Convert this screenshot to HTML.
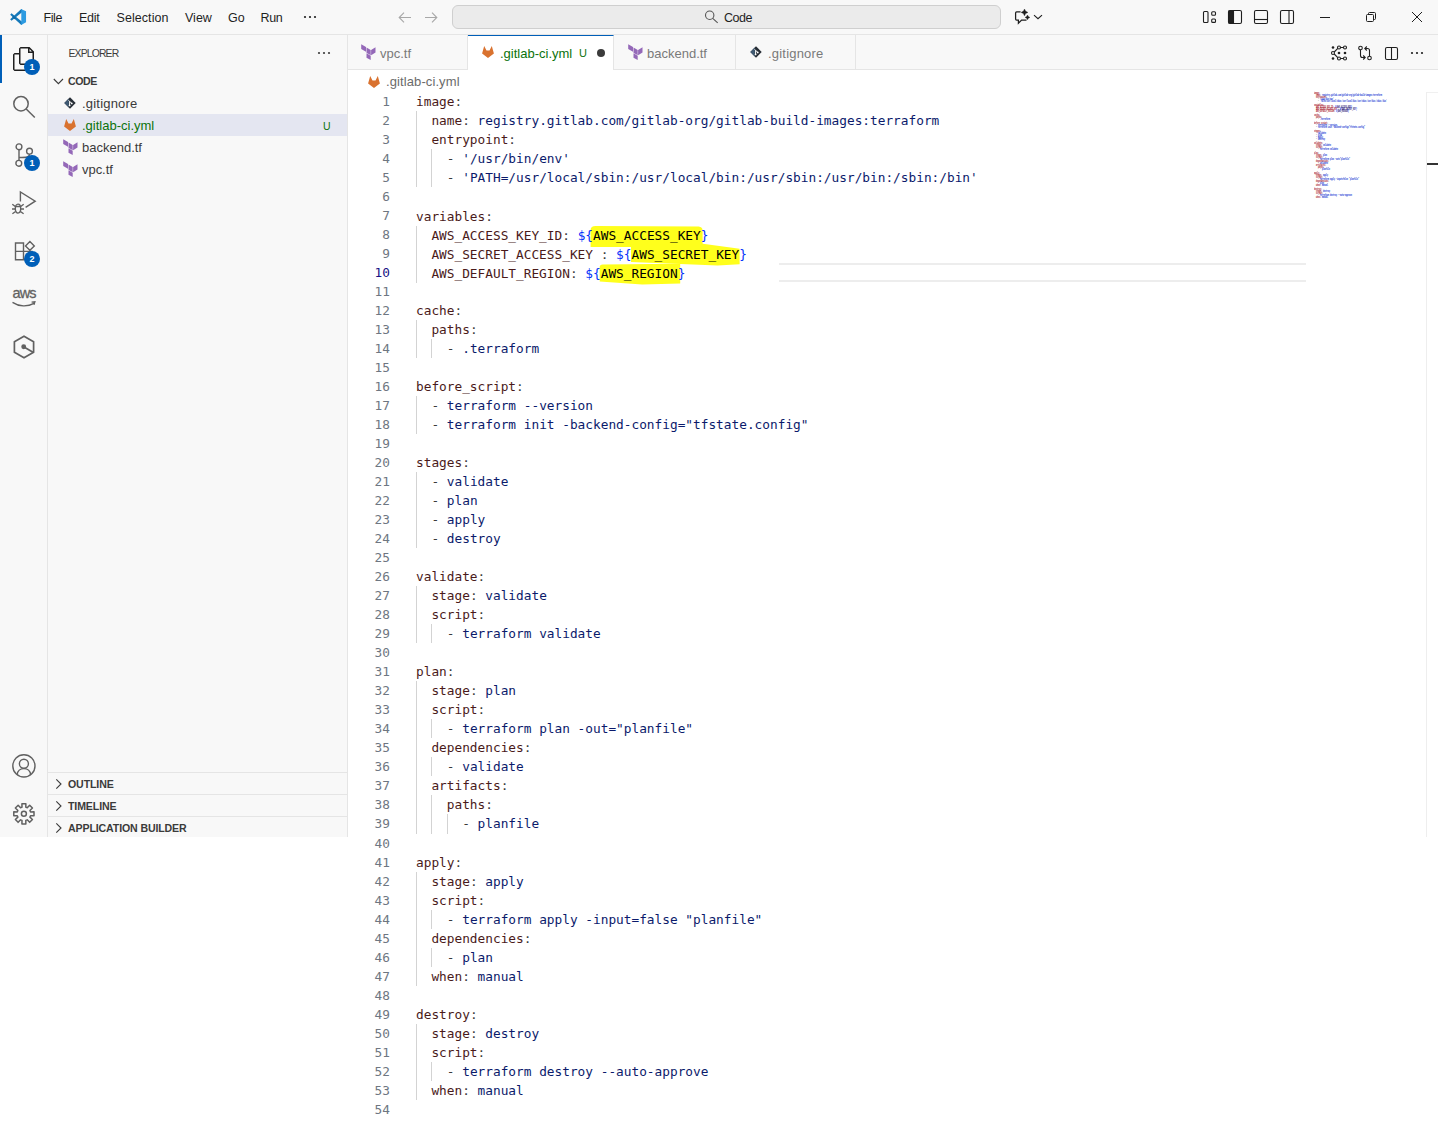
<!DOCTYPE html>
<html lang="en">
<head>
<meta charset="utf-8">
<title>.gitlab-ci.yml - Code - Visual Studio Code</title>
<style>
*{box-sizing:border-box;margin:0;padding:0}
html,body{width:1442px;height:1138px;background:#fff;overflow:hidden}
body{position:relative;font-family:"Liberation Sans",sans-serif;font-size:13px;color:#3b3b3b}
.abs{position:absolute}
i{display:block;position:absolute;font-style:normal}
svg{display:block;position:absolute;overflow:visible}
/* ---------- title bar ---------- */
#titlebar{position:absolute;left:0;top:0;width:1438px;height:35px;background:#f8f8f8;border-bottom:1px solid #e5e5e5}
#titlebar .m{position:absolute;top:0;height:34px;line-height:36px;font-size:12.5px;color:#1f1f1f;white-space:nowrap}
#search{position:absolute;left:452px;top:5px;width:549px;height:24px;background:#ebebeb;border:1px solid #cfcfcf;border-radius:6px}
#search span{position:absolute;left:271px;top:0;line-height:24px;font-size:12.5px;letter-spacing:-.5px;color:#1f1f1f}
/* ---------- activity bar ---------- */
#activity{position:absolute;left:0;top:35px;width:48px;height:802px;background:#f8f8f8;border-right:1px solid #e5e5e5}
#activity .ind{left:0;top:0;width:2px;height:48px;background:#005fb8}
.badge{position:absolute;width:16px;height:16px;border-radius:8px;background:#005fb8;color:#fff;font-size:9px;font-weight:bold;line-height:16px;text-align:center}
/* ---------- side bar ---------- */
#sidebar{position:absolute;left:48px;top:35px;width:300px;height:802px;background:#f8f8f8;border-right:1px solid #e5e5e5}
#sidebar .title{position:absolute;left:20.5px;top:0;height:35px;line-height:37px;font-size:10.4px;letter-spacing:-.84px;color:#3b3b3b;white-space:nowrap}
#sidebar .hd{position:absolute;left:0;width:299px;height:22px;line-height:22px;font-size:10.6px;letter-spacing:-.13px;font-weight:bold;color:#3b3b3b;white-space:nowrap}
#sidebar .hd b{position:absolute;left:20px;top:0}
#sidebar .hd.bt{border-top:1px solid #e5e5e5}
#sidebar .f{position:absolute;left:0;width:299px;height:22px;line-height:24px;font-size:13px;color:#3b3b3b;white-space:nowrap}
#sidebar .f span{position:absolute;left:34px;top:0}
#sidebar .f.sel{background:#e4e6f1;color:#0c730c}
#sidebar .f .u{left:auto;right:16.500px;top:-.5px;font-size:10.500px;color:#0c730c}
/* ---------- editor ---------- */
#tabs{position:absolute;left:348px;top:35px;width:1090px;height:35px;background:#f8f8f8;border-bottom:1px solid #e5e5e5}
.tab{position:absolute;top:0;height:35px;border-right:1px solid #e5e5e5;line-height:37px;font-size:13px;color:#7a7a7a;white-space:nowrap}
.tab span{position:absolute;top:0}
.tab.act{background:#fff;border-top:1px solid #005fb8;color:#0c730c;height:35px;line-height:35px}
#crumb{position:absolute;left:348px;top:70px;width:1078px;height:22px;line-height:24px;letter-spacing:.1px;font-size:13px;color:#6b6b6b;white-space:nowrap}
#crumb span{position:absolute;left:38px;top:0}
#code{position:absolute;left:348px;top:92px;width:958px;font-family:"DejaVu Sans Mono","Liberation Mono",monospace;font-size:12.79px;line-height:19px;color:#3b3b3b}
.row{position:relative;height:19px}
.ln{position:absolute;left:0;top:0;width:42px;text-align:right;color:#6e7681}
.ln.cur{color:#171184}
.tx{position:absolute;left:68px;top:0;white-space:pre}
.k{color:#4a1a1a}.v{color:#0b1a6b}.p{color:#3b3b3b}.b{color:#0431fa}.h{color:#000}
.g{width:1px;background:#d3d3d3}
#minimap{position:absolute;left:1314px;top:92px;width:924px;transform-origin:0 0;transform:scale(.12987,.2);font-family:"DejaVu Sans Mono","Liberation Mono",monospace;font-size:12.79px;line-height:10px;font-weight:bold;white-space:pre}
#minimap .mr{height:10px}
#minimap .k{color:#a31515}#minimap .v{color:#0431d0}#minimap .b{color:#0431fa}#minimap .h{color:#10106a}
.row.seam{margin-top:1px}
.tx.sh{top:1px}
</style>
</head>
<body>

<!-- ================= TITLE BAR ================= -->
<div id="titlebar">
  <svg style="left:10px;top:9px" width="16" height="16" viewBox="0 0 16 16">
    <path d="M.2 10.200L1.500 11.700 12.050 3.200V.5L11.300 .1z" fill="#1579ba"/>
    <path d="M.2 5.800L1.500 4.300 12.050 12.800V15.500L11.300 15.900z" fill="#1579ba"/>
    <path d="M3.700 6.800L6.300 9 4.800 10.200 2.200 8z" fill="#0f6aa6"/>
    <path d="M11.300 .1L12.050 .5 16.050 2.300V13.300L12.050 15.500 11.300 15.900z" fill="#2d9be1"/>
  </svg>
  <div class="m" style="left:43.5px;letter-spacing:-.4px">File</div>
  <div class="m" style="left:79px;letter-spacing:-.3px">Edit</div>
  <div class="m" style="left:116.5px;letter-spacing:.07px">Selection</div>
  <div class="m" style="left:185px">View</div>
  <div class="m" style="left:228px;letter-spacing:.1px">Go</div>
  <div class="m" style="left:260.5px;letter-spacing:-.4px">Run</div>
  <svg style="left:302px;top:9px" width="16" height="16" viewBox="0 0 16 16" fill="#1f1f1f"><circle cx="3" cy="8" r="1.1"/><circle cx="8" cy="8" r="1.1"/><circle cx="13" cy="8" r="1.1"/></svg>
  <!-- nav arrows -->
  <svg style="left:397px;top:9px" width="16" height="16" viewBox="0 0 16 16" fill="none" stroke="#a8a8a8" stroke-width="1.1"><path d="M14 8.5H2.5M7 3.700L2.200 8.500 7 13.300"/></svg>
  <svg style="left:423px;top:9px" width="16" height="16" viewBox="0 0 16 16" fill="none" stroke="#a8a8a8" stroke-width="1.1"><path d="M2 8.5h11.500M9 3.700L13.800 8.500 9 13.300"/></svg>
  <div id="search">
    <svg style="left:252px;top:4px" width="14" height="14" viewBox="0 0 14 14" fill="none" stroke="#555" stroke-width="1.1"><circle cx="4.7" cy="5.25" r="4.2"/><path d="M7.7 8.3l5 4.500"/></svg>
    <span>Code</span>
  </div>
  <!-- copilot-ish chat icon -->
  <svg style="left:1013px;top:9px" width="16" height="16" viewBox="0 0 16 16" fill="none" stroke="#1f1f1f" stroke-width="1.25"><path d="M7.600 2.900H3.600q-1 0-1 1V10q0 1 1 1h1.800v3.200L8.600 11h4.900"/><path d="M11.500 0q.5 2.900 3.400 3.400q-2.900 .5-3.400 3.400q-.5-2.900-3.400-3.400q2.900-.5 3.400-3.400zM14.500 6q.4 2 2.400 2.400q-2 .4-2.400 2.400q-.4-2-2.400-2.400q2-.4 2.400-2.400z" fill="#1f1f1f" stroke-width=".4"/></svg>
  <svg style="left:1032px;top:12px" width="10" height="10" viewBox="0 0 10 10" fill="none" stroke="#1f1f1f" stroke-width="1.1"><path d="M2 3.200L6 6.700l4-3.600"/></svg>
  
  <svg style="left:1201px;top:9px" width="16" height="16" viewBox="0 0 16 16" fill="none" stroke="#1f1f1f" stroke-width="1.1"><rect x="2.5" y="2.500" width="4.5" height="11" rx="1"/><rect x="10.7" y="2.8" width="3.8" height="3.4" rx="1"/><rect x="10.7" y="10" width="3.8" height="3.4" rx="1"/></svg>
  <svg style="left:1227px;top:9px" width="16" height="16" viewBox="0 0 16 16" fill="none" stroke="#1f1f1f" stroke-width="1.1"><rect x="1.5" y="1.5" width="13" height="13" rx="1.5"/><path d="M2 2h4.500v12H2z" fill="#1f1f1f"/></svg>
  <svg style="left:1253px;top:9px" width="16" height="16" viewBox="0 0 16 16" fill="none" stroke="#1f1f1f" stroke-width="1.1"><rect x="1.5" y="1.5" width="13" height="13" rx="1.5"/><path d="M1.5 10.5h13"/></svg>
  <svg style="left:1279px;top:9px" width="16" height="16" viewBox="0 0 16 16" fill="none" stroke="#1f1f1f" stroke-width="1.1"><rect x="1.5" y="1.5" width="13" height="13" rx="1.5"/><path d="M10 1.5v13"/></svg>
  <!-- window controls -->
  <svg style="left:1320px;top:12px" width="10" height="10" viewBox="0 0 10 10" stroke="#1f1f1f" stroke-width="1"><path d="M0 5.5h10"/></svg>
  <svg style="left:1366px;top:12px" width="10" height="10" viewBox="0 0 10 10" fill="none" stroke="#1f1f1f" stroke-width="1"><rect x=".5" y="2.5" width="7" height="7" rx="1"/><path d="M2.5 2.5V1.5q0-1 1-1h5q1 0 1 1v5q0 1-1 1H7.5"/></svg>
  <svg style="left:1412px;top:12px" width="10" height="10" viewBox="0 0 10 10" stroke="#1f1f1f" stroke-width="1"><path d="M0 0l10 10M10 0L0 10"/></svg>
</div>

<!-- ================= ACTIVITY BAR ================= -->
<div id="activity">
  <i class="ind"></i>
  <!-- explorer -->
  <svg style="left:12px;top:12px" width="24" height="24" viewBox="0 0 24 24" fill="#1f1f1f"><path d="M17.5 0h-9L7 1.5V6H2.5L1 7.5v15.07L2.5 24h12.07L16 22.57V18h4.7l1.3-1.43V4.5L17.5 0zm0 2.12l2.38 2.38H17.5V2.12zm-3 20.38h-12v-15H7v9.07L8.500 18h6v4.5zm6-6h-12v-15H16V6h4.5v10.500z"/></svg>
  <div class="badge" style="left:24px;top:24px">1</div>
  <!-- search -->
  <svg style="left:12px;top:60px" width="24" height="24" viewBox="0 0 24 24" fill="none" stroke="#616161" stroke-width="1.5"><circle cx="9" cy="8.700" r="7.200"/><path d="M14.200 14l8.600 8.500"/></svg>
  <!-- source control -->
  <svg style="left:12px;top:108px" width="24" height="24" viewBox="0 0 24 24" fill="none" stroke="#616161" stroke-width="1.400"><circle cx="7" cy="3.800" r="2.900"/><circle cx="17.500" cy="8.200" r="2.900"/><circle cx="6.800" cy="20.300" r="2.900"/><path d="M7 6.700v10.700M17.500 11.100c0 3.200-3 3.400-10.500 3.400"/></svg>
  <div class="badge" style="left:24px;top:120px">1</div>
  <!-- run and debug -->
  <svg style="left:12px;top:156px" width="24" height="24" viewBox="0 0 24 24" fill="none" stroke="#616161" stroke-width="1.400"><path d="M8.400 10.600V1L23.200 10.200 13.600 16.300"/><ellipse cx="6" cy="17.600" rx="2.700" ry="4.500"/><path d="M3.400 15.500h5.200M.3 13.300l3 2.200M11.700 13.300l-3 2.200M0 18h3.300M8.700 18H12M.4 22.800l3.200-2.300M11.600 22.800l-3.200-2.300"/></svg>
  <!-- extensions -->
  <svg style="left:12px;top:204px" width="24" height="24" viewBox="0 0 24 24" fill="none" stroke="#616161" stroke-width="1.400"><path d="M3.500 4h8v8.400h-8zM3.500 12.400h8v8.400h-8zM11.500 12.400h8.400v8.400h-8.400zM17.900 2.500l4.400 4.400-4.400 4.400-4.400-4.400z"/></svg>
  <div class="badge" style="left:24px;top:216px">2</div>
  <!-- aws -->
  <div class="abs" style="left:12.500px;top:250px;width:26px;height:16px;line-height:16px;font-size:14.500px;color:#616161;-webkit-text-stroke:.3px #616161;letter-spacing:-.9px;white-space:nowrap">aws</div>
  <svg style="left:12px;top:266px" width="24" height="8" viewBox="0 0 24 8" fill="none" stroke="#616161" stroke-width="1.300"><path d="M.5 1.400c6.500 4.400 15 4.600 21.500 1M19.600 1.100l3.300-.3-.9 3"/></svg>
  <!-- hex icon -->
  <svg style="left:12px;top:300px" width="24" height="24" viewBox="0 0 24 24" fill="none" stroke="#616161" stroke-width="1.700"><path d="M12 1.200l9.600 5.500v10.600L12 22.800l-9.600-5.500V6.700z"/><path d="M12 12l9 5.200"/><circle cx="11.700" cy="11.800" r="1.600" fill="#616161"/></svg>
  <!-- account -->
  <svg style="left:12px;top:719px" width="24" height="24" viewBox="0 0 24 24" fill="none" stroke="#616161" stroke-width="1.400"><circle cx="11.900" cy="11.900" r="11.100"/><circle cx="11.900" cy="9.700" r="4.500"/><path d="M5.100 20.600c.6-4 3.300-6 6.800-6s6.200 2 6.800 6"/></svg>
  <!-- settings gear -->
  <svg style="left:12px;top:767px" width="24" height="24" viewBox="0 0 24 24" fill="none" stroke="#616161" stroke-width="1.500" stroke-linejoin="round"><circle cx="11.900" cy="11.800" r="2.500"/><path d="M10.00 5.17L9.93 1.69L13.87 1.69L13.80 5.17L15.25 5.77L17.66 3.26L20.44 6.04L17.93 8.45L18.53 9.90L22.01 9.83L22.01 13.77L18.53 13.70L17.93 15.15L20.44 17.56L17.66 20.34L15.25 17.83L13.80 18.43L13.87 21.91L9.93 21.91L10.00 18.43L8.55 17.83L6.14 20.34L3.36 17.56L5.87 15.15L5.27 13.70L1.79 13.77L1.79 9.83L5.27 9.90L5.87 8.45L3.36 6.04L6.14 3.26L8.55 5.77z"/></svg>
</div>

<!-- ================= SIDE BAR ================= -->
<div id="sidebar">
  <div class="title">EXPLORER</div>
  <svg style="left:268px;top:10px" width="16" height="16" viewBox="0 0 16 16" fill="#3b3b3b"><circle cx="3" cy="8" r="1.100"/><circle cx="8" cy="8" r="1.100"/><circle cx="13" cy="8" r="1.100"/></svg>
  <div class="hd" style="top:35px"><svg style="left:4px;top:3px" width="16" height="16" viewBox="0 0 16 16" fill="none" stroke="#3b3b3b" stroke-width="1.100"><path d="M1.800 6L6.400 10.600 11 6"/></svg><b style="letter-spacing:-.45px">CODE</b></div>
  <div class="f" style="top:57px">
    <svg style="left:16px;top:5px" width="12" height="12" viewBox="0 0 12 12"><path d="M6 .3L11.700 6 6 11.700.3 6z" fill="#262d35"/><path d="M4.800 1.500v9L.3 6z" fill="#3f5a73"/><path d="M4.600 3.300l3.200 3.200M5.600 4.400v4.200" stroke="#fff" stroke-width="1" fill="none"/><circle cx="5.600" cy="8.400" r=".9" fill="#fff"/><circle cx="7.700" cy="6.400" r=".9" fill="#fff"/></svg>
    <span style="letter-spacing:.2px">.gitignore</span></div>
  <div class="f sel" style="top:79px">
    <svg style="left:16px;top:5px" width="12" height="12" viewBox="0 0 12 12"><path d="M6 12L.1 7.400 2.200 0l2.300 4.600h3L9.800 0l2.100 7.400z" fill="#d9722f"/></svg>
    <span>.gitlab-ci.yml</span><span class="u">U</span></div>
  <div class="f" style="top:101px">
    <svg style="left:15px;top:3.300px" width="14.500" height="16" viewBox="0 0 14.500 16" fill="#9468b8"><path d="M.2.300L5 3.100v4.700L.2 5.100zM5.500 3.400l4.200 2.500v5.300L5.500 8.700zM10.100 5.900l4.400-2.700v5.300l-4.400 2.700zM5.500 9.200l4.200 2.500v4.200l-4.200-2.200z"/></svg>
    <span>backend.tf</span></div>
  <div class="f" style="top:123px">
    <svg style="left:15px;top:3.300px" width="14.500" height="16" viewBox="0 0 14.500 16" fill="#9468b8"><path d="M.2.300L5 3.100v4.700L.2 5.100zM5.500 3.400l4.200 2.500v5.300L5.500 8.700zM10.100 5.900l4.400-2.700v5.300l-4.400 2.700zM5.500 9.200l4.200 2.500v4.200l-4.200-2.200z"/></svg>
    <span style="letter-spacing:-.05px">vpc.tf</span></div>

  <div class="hd bt" style="top:737px"><svg style="left:4px;top:3px" width="16" height="16" viewBox="0 0 16 16" fill="none" stroke="#3b3b3b" stroke-width="1.100"><path d="M4.300 3.300L9 8l-4.700 4.700"/></svg><b>OUTLINE</b></div>
  <div class="hd bt" style="top:759px"><svg style="left:4px;top:3px" width="16" height="16" viewBox="0 0 16 16" fill="none" stroke="#3b3b3b" stroke-width="1.100"><path d="M4.300 3.300L9 8l-4.700 4.700"/></svg><b>TIMELINE</b></div>
  <div class="hd bt" style="top:781px"><svg style="left:4px;top:3px" width="16" height="16" viewBox="0 0 16 16" fill="none" stroke="#3b3b3b" stroke-width="1.100"><path d="M4.300 3.300L9 8l-4.700 4.700"/></svg><b>APPLICATION BUILDER</b></div>
</div>

<!-- ================= EDITOR ================= -->
<div id="tabs">
  <div class="tab" style="left:0;width:120px">
    <svg style="left:12.700px;top:9.300px" width="14.500" height="16" viewBox="0 0 14.500 16" fill="#9468b8"><path d="M.2.300L5 3.100v4.700L.2 5.100zM5.500 3.400l4.200 2.500v5.300L5.500 8.700zM10.100 5.900l4.400-2.700v5.300l-4.400 2.700zM5.500 9.200l4.200 2.500v4.200l-4.200-2.200z"/></svg>
    <span style="left:32px">vpc.tf</span></div>
  <div class="tab act" style="left:120px;width:146px">
    <svg style="left:14px;top:10.4px" width="12" height="12" viewBox="0 0 12 12"><path d="M6 12L.1 7.400 2.200 0l2.300 4.600h3L9.800 0l2.100 7.400z" fill="#d9722f"/></svg>
    <span style="left:32px">.gitlab-ci.yml</span><span style="left:111px;font-size:11px">U</span>
    <i style="left:129px;top:13px;width:8px;height:8px;border-radius:4px;background:#3b3b3b"></i></div>
  <div class="tab" style="left:266px;width:122px">
    <svg style="left:14px;top:9.300px" width="14.500" height="16" viewBox="0 0 14.500 16" fill="#9468b8"><path d="M.2.300L5 3.100v4.700L.2 5.100zM5.500 3.400l4.200 2.500v5.300L5.500 8.700zM10.100 5.900l4.400-2.700v5.300l-4.400 2.700zM5.500 9.200l4.200 2.500v4.200l-4.200-2.200z"/></svg>
    <span style="left:33px">backend.tf</span></div>
  <div class="tab" style="left:388px;width:120px">
    <svg style="left:14px;top:11px" width="12" height="12" viewBox="0 0 12 12"><path d="M6 .3L11.700 6 6 11.700.3 6z" fill="#262d35"/><path d="M4.800 1.500v9L.3 6z" fill="#3f5a73"/><path d="M4.600 3.300l3.200 3.200M5.600 4.400v4.200" stroke="#fff" stroke-width="1" fill="none"/><circle cx="5.600" cy="8.400" r=".9" fill="#fff"/><circle cx="7.700" cy="6.400" r=".9" fill="#fff"/></svg>
    <span style="left:32px;letter-spacing:.2px">.gitignore</span></div>
  <!-- editor actions -->
  <svg style="left:983px;top:10px" width="16" height="16" viewBox="0 0 16 16" fill="none" stroke="#1f1f1f" stroke-width="1.100"><circle cx="8" cy="2.500" r="1.500"/><circle cx="14" cy="2.500" r="1.500"/><circle cx="8" cy="13.500" r="1.500"/><circle cx="14" cy="13.500" r="1.500"/><circle cx="2" cy="8" r="1.500"/><path d="M9.500 2.500h3M9.500 13.500h3M3.200 7l3.600-3.600M3.200 9l3.600 3.600"/><g fill="#1f1f1f" stroke="none"><circle cx="2" cy="2.500" r="1.300"/><circle cx="2" cy="13.500" r="1.300"/><circle cx="8" cy="8" r="1.300"/><circle cx="14" cy="8" r="1.300"/></g></svg>
  <svg style="left:1009px;top:10px" width="16" height="16" viewBox="0 0 16 16" fill="none" stroke="#1f1f1f" stroke-width="1.100"><circle cx="3.500" cy="3" r="1.800"/><circle cx="12.500" cy="13" r="1.800"/><path d="M3.500 4.800v5.700q0 2 2 2h2.500M6.200 10.500l2 2-2 2M12.500 11.200V5.500q0-2-2-2H8M9.800 1.500l-2 2 2 2"/></svg>
  <svg style="left:1035px;top:10px" width="16" height="16" viewBox="0 0 16 16" fill="none" stroke="#1f1f1f" stroke-width="1.1"><rect x="2.5" y="2.5" width="12" height="12" rx="1.5"/><path d="M8.500 2.5v12"/></svg>
  <svg style="left:1061px;top:10px" width="16" height="16" viewBox="0 0 16 16" fill="#1f1f1f"><circle cx="3" cy="8" r="1.100"/><circle cx="8" cy="8" r="1.100"/><circle cx="13" cy="8" r="1.100"/></svg>
</div>
<div id="crumb">
  <svg style="left:20px;top:5.700px" width="12" height="12" viewBox="0 0 12 12"><path d="M6 12L.1 7.400 2.200 0l2.300 4.600h3L9.800 0l2.100 7.400z" fill="#d9722f"/></svg>
  <span>.gitlab-ci.yml</span>
</div>

<!-- yellow highlighter strokes -->
<svg style="left:0;top:0" width="1442" height="1138" viewBox="0 0 1442 1138" fill="#ffff1c">
  <path d="M590.600 230q0-4 5-4l103 .600q4 .400 4 4v16.400h-112z"/>
  <path d="M631 243.500h70l38.600 5.200v15.600l-22 1.200-86.600-3.400z"/>
  <path d="M599.700 267q0-2.500 3-2.500l77.500-.700v19.600l-38 1-42.500-2.800z"/>
</svg>

<!-- current line outline -->
<i style="left:779px;top:263px;width:527px;height:19px;border-top:2px solid #ededed;border-bottom:2px solid #ededed"></i>

<!-- indent guides -->
<i class="g" style="left:416.0px;top:111px;height:76px"></i>
<i class="g" style="left:431.4px;top:149px;height:38px"></i>
<i class="g" style="left:416.0px;top:226px;height:57px"></i>
<i class="g" style="left:416.0px;top:320px;height:38px"></i>
<i class="g" style="left:431.4px;top:339px;height:19px"></i>
<i class="g" style="left:416.0px;top:396px;height:38px"></i>
<i class="g" style="left:416.0px;top:472px;height:76px"></i>
<i class="g" style="left:416.0px;top:586px;height:57px"></i>
<i class="g" style="left:431.4px;top:624px;height:19px"></i>
<i class="g" style="left:416.0px;top:681px;height:153px"></i>
<i class="g" style="left:431.4px;top:719px;height:19px"></i>
<i class="g" style="left:431.4px;top:757px;height:19px"></i>
<i class="g" style="left:431.4px;top:795px;height:39px"></i>
<i class="g" style="left:446.8px;top:814px;height:20px"></i>
<i class="g" style="left:416.0px;top:872px;height:114px"></i>
<i class="g" style="left:431.4px;top:910px;height:19px"></i>
<i class="g" style="left:431.4px;top:948px;height:19px"></i>
<i class="g" style="left:416.0px;top:1024px;height:76px"></i>
<i class="g" style="left:431.4px;top:1062px;height:19px"></i>

<div id="code">
<div class="row"><span class="ln">1</span><span class="tx"><span class="k">image</span><span class="p">:</span></span></div>
<div class="row"><span class="ln">2</span><span class="tx">  <span class="k">name</span><span class="p">:</span> <span class="v">registry.gitlab.com/gitlab-org/gitlab-build-images:terraform</span></span></div>
<div class="row"><span class="ln">3</span><span class="tx">  <span class="k">entrypoint</span><span class="p">:</span></span></div>
<div class="row"><span class="ln">4</span><span class="tx">    <span class="p">-</span> <span class="v">'/usr/bin/env'</span></span></div>
<div class="row"><span class="ln">5</span><span class="tx">    <span class="p">-</span> <span class="v">'PATH=/usr/local/sbin:/usr/local/bin:/usr/sbin:/usr/bin:/sbin:/bin'</span></span></div>
<div class="row"><span class="ln">6</span><span class="tx"></span></div>
<div class="row"><span class="ln">7</span><span class="tx sh"><span class="k">variables</span><span class="p">:</span></span></div>
<div class="row"><span class="ln">8</span><span class="tx sh">  <span class="k">AWS_ACCESS_KEY_ID</span><span class="p">:</span> <span class="b">${</span><span class="h">AWS_ACCESS_KEY</span><span class="b">}</span></span></div>
<div class="row"><span class="ln">9</span><span class="tx sh">  <span class="k">AWS_SECRET_ACCESS_KEY</span> <span class="p">:</span> <span class="b">${</span><span class="h">AWS_SECRET_KEY</span><span class="b">}</span></span></div>
<div class="row"><span class="ln cur">10</span><span class="tx sh">  <span class="k">AWS_DEFAULT_REGION</span><span class="p">:</span> <span class="b">${</span><span class="h">AWS_REGION</span><span class="b">}</span></span></div>
<div class="row"><span class="ln">11</span><span class="tx"></span></div>
<div class="row"><span class="ln">12</span><span class="tx"><span class="k">cache</span><span class="p">:</span></span></div>
<div class="row"><span class="ln">13</span><span class="tx">  <span class="k">paths</span><span class="p">:</span></span></div>
<div class="row"><span class="ln">14</span><span class="tx">    <span class="p">-</span> <span class="v">.terraform</span></span></div>
<div class="row"><span class="ln">15</span><span class="tx"></span></div>
<div class="row"><span class="ln">16</span><span class="tx"><span class="k">before_script</span><span class="p">:</span></span></div>
<div class="row"><span class="ln">17</span><span class="tx">  <span class="p">-</span> <span class="v">terraform --version</span></span></div>
<div class="row"><span class="ln">18</span><span class="tx">  <span class="p">-</span> <span class="v">terraform init -backend-config="tfstate.config"</span></span></div>
<div class="row"><span class="ln">19</span><span class="tx"></span></div>
<div class="row"><span class="ln">20</span><span class="tx"><span class="k">stages</span><span class="p">:</span></span></div>
<div class="row"><span class="ln">21</span><span class="tx">  <span class="p">-</span> <span class="v">validate</span></span></div>
<div class="row"><span class="ln">22</span><span class="tx">  <span class="p">-</span> <span class="v">plan</span></span></div>
<div class="row"><span class="ln">23</span><span class="tx">  <span class="p">-</span> <span class="v">apply</span></span></div>
<div class="row"><span class="ln">24</span><span class="tx">  <span class="p">-</span> <span class="v">destroy</span></span></div>
<div class="row"><span class="ln">25</span><span class="tx"></span></div>
<div class="row"><span class="ln">26</span><span class="tx"><span class="k">validate</span><span class="p">:</span></span></div>
<div class="row"><span class="ln">27</span><span class="tx">  <span class="k">stage</span><span class="p">:</span> <span class="v">validate</span></span></div>
<div class="row"><span class="ln">28</span><span class="tx">  <span class="k">script</span><span class="p">:</span></span></div>
<div class="row"><span class="ln">29</span><span class="tx">    <span class="p">-</span> <span class="v">terraform validate</span></span></div>
<div class="row"><span class="ln">30</span><span class="tx"></span></div>
<div class="row"><span class="ln">31</span><span class="tx"><span class="k">plan</span><span class="p">:</span></span></div>
<div class="row"><span class="ln">32</span><span class="tx">  <span class="k">stage</span><span class="p">:</span> <span class="v">plan</span></span></div>
<div class="row"><span class="ln">33</span><span class="tx">  <span class="k">script</span><span class="p">:</span></span></div>
<div class="row"><span class="ln">34</span><span class="tx">    <span class="p">-</span> <span class="v">terraform plan -out="planfile"</span></span></div>
<div class="row"><span class="ln">35</span><span class="tx">  <span class="k">dependencies</span><span class="p">:</span></span></div>
<div class="row"><span class="ln">36</span><span class="tx">    <span class="p">-</span> <span class="v">validate</span></span></div>
<div class="row"><span class="ln">37</span><span class="tx">  <span class="k">artifacts</span><span class="p">:</span></span></div>
<div class="row"><span class="ln">38</span><span class="tx">    <span class="k">paths</span><span class="p">:</span></span></div>
<div class="row"><span class="ln">39</span><span class="tx">      <span class="p">-</span> <span class="v">planfile</span></span></div>
<div class="row seam"><span class="ln">40</span><span class="tx"></span></div>
<div class="row"><span class="ln">41</span><span class="tx"><span class="k">apply</span><span class="p">:</span></span></div>
<div class="row"><span class="ln">42</span><span class="tx">  <span class="k">stage</span><span class="p">:</span> <span class="v">apply</span></span></div>
<div class="row"><span class="ln">43</span><span class="tx">  <span class="k">script</span><span class="p">:</span></span></div>
<div class="row"><span class="ln">44</span><span class="tx">    <span class="p">-</span> <span class="v">terraform apply -input=false "planfile"</span></span></div>
<div class="row"><span class="ln">45</span><span class="tx">  <span class="k">dependencies</span><span class="p">:</span></span></div>
<div class="row"><span class="ln">46</span><span class="tx">    <span class="p">-</span> <span class="v">plan</span></span></div>
<div class="row"><span class="ln">47</span><span class="tx">  <span class="k">when</span><span class="p">:</span> <span class="v">manual</span></span></div>
<div class="row"><span class="ln">48</span><span class="tx"></span></div>
<div class="row"><span class="ln">49</span><span class="tx"><span class="k">destroy</span><span class="p">:</span></span></div>
<div class="row"><span class="ln">50</span><span class="tx">  <span class="k">stage</span><span class="p">:</span> <span class="v">destroy</span></span></div>
<div class="row"><span class="ln">51</span><span class="tx">  <span class="k">script</span><span class="p">:</span></span></div>
<div class="row"><span class="ln">52</span><span class="tx">    <span class="p">-</span> <span class="v">terraform destroy --auto-approve</span></span></div>
<div class="row"><span class="ln">53</span><span class="tx">  <span class="k">when</span><span class="p">:</span> <span class="v">manual</span></span></div>
<div class="row"><span class="ln">54</span><span class="tx"></span></div>
</div>

<!-- minimap -->
<div id="minimap"><div class="mr"><span class="k">image</span><span class="p">:</span></div><div class="mr">  <span class="k">name</span><span class="p">:</span> <span class="v">registry.gitlab.com/gitlab-org/gitlab-build-images:terraform</span></div><div class="mr">  <span class="k">entrypoint</span><span class="p">:</span></div><div class="mr">    <span class="p">-</span> <span class="v">'/usr/bin/env'</span></div><div class="mr">    <span class="p">-</span> <span class="v">'PATH=/usr/local/sbin:/usr/local/bin:/usr/sbin:/usr/bin:/sbin:/bin'</span></div><div class="mr"></div><div class="mr"><span class="k">variables</span><span class="p">:</span></div><div class="mr">  <span class="k">AWS_ACCESS_KEY_ID</span><span class="p">:</span> <span class="b">${</span><span class="h">AWS_ACCESS_KEY</span><span class="b">}</span></div><div class="mr">  <span class="k">AWS_SECRET_ACCESS_KEY</span> <span class="p">:</span> <span class="b">${</span><span class="h">AWS_SECRET_KEY</span><span class="b">}</span></div><div class="mr">  <span class="k">AWS_DEFAULT_REGION</span><span class="p">:</span> <span class="b">${</span><span class="h">AWS_REGION</span><span class="b">}</span></div><div class="mr"></div><div class="mr"><span class="k">cache</span><span class="p">:</span></div><div class="mr">  <span class="k">paths</span><span class="p">:</span></div><div class="mr">    <span class="p">-</span> <span class="v">.terraform</span></div><div class="mr"></div><div class="mr"><span class="k">before_script</span><span class="p">:</span></div><div class="mr">  <span class="p">-</span> <span class="v">terraform --version</span></div><div class="mr">  <span class="p">-</span> <span class="v">terraform init -backend-config="tfstate.config"</span></div><div class="mr"></div><div class="mr"><span class="k">stages</span><span class="p">:</span></div><div class="mr">  <span class="p">-</span> <span class="v">validate</span></div><div class="mr">  <span class="p">-</span> <span class="v">plan</span></div><div class="mr">  <span class="p">-</span> <span class="v">apply</span></div><div class="mr">  <span class="p">-</span> <span class="v">destroy</span></div><div class="mr"></div><div class="mr"><span class="k">validate</span><span class="p">:</span></div><div class="mr">  <span class="k">stage</span><span class="p">:</span> <span class="v">validate</span></div><div class="mr">  <span class="k">script</span><span class="p">:</span></div><div class="mr">    <span class="p">-</span> <span class="v">terraform validate</span></div><div class="mr"></div><div class="mr"><span class="k">plan</span><span class="p">:</span></div><div class="mr">  <span class="k">stage</span><span class="p">:</span> <span class="v">plan</span></div><div class="mr">  <span class="k">script</span><span class="p">:</span></div><div class="mr">    <span class="p">-</span> <span class="v">terraform plan -out="planfile"</span></div><div class="mr">  <span class="k">dependencies</span><span class="p">:</span></div><div class="mr">    <span class="p">-</span> <span class="v">validate</span></div><div class="mr">  <span class="k">artifacts</span><span class="p">:</span></div><div class="mr">    <span class="k">paths</span><span class="p">:</span></div><div class="mr">      <span class="p">-</span> <span class="v">planfile</span></div><div class="mr"></div><div class="mr"><span class="k">apply</span><span class="p">:</span></div><div class="mr">  <span class="k">stage</span><span class="p">:</span> <span class="v">apply</span></div><div class="mr">  <span class="k">script</span><span class="p">:</span></div><div class="mr">    <span class="p">-</span> <span class="v">terraform apply -input=false "planfile"</span></div><div class="mr">  <span class="k">dependencies</span><span class="p">:</span></div><div class="mr">    <span class="p">-</span> <span class="v">plan</span></div><div class="mr">  <span class="k">when</span><span class="p">:</span> <span class="v">manual</span></div><div class="mr"></div><div class="mr"><span class="k">destroy</span><span class="p">:</span></div><div class="mr">  <span class="k">stage</span><span class="p">:</span> <span class="v">destroy</span></div><div class="mr">  <span class="k">script</span><span class="p">:</span></div><div class="mr">    <span class="p">-</span> <span class="v">terraform destroy --auto-approve</span></div><div class="mr">  <span class="k">when</span><span class="p">:</span> <span class="v">manual</span></div><div class="mr"></div></div>

<!-- scrollbar / overview ruler -->
<i style="left:1426px;top:92px;width:1px;height:745px;background:#eeeeee"></i>
<i style="left:1427px;top:92px;width:11px;height:1px;background:#f0f0f0"></i>
<i style="left:1427px;top:163px;width:11px;height:2px;background:#333"></i>

</body>
</html>
